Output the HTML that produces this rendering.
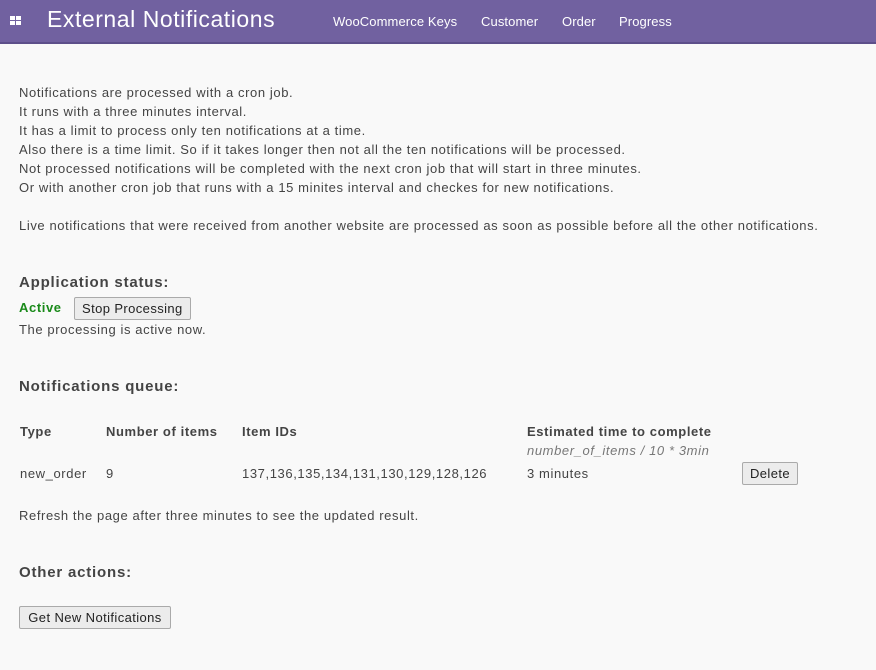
<!DOCTYPE html>
<html><head><style>
body{margin:0;background:#f9f9f9;font-family:"Liberation Sans",sans-serif;font-size:13px;color:#444;width:876px;height:670px;overflow:hidden;letter-spacing:0.6px}
.hdr{height:42px;background:#7161a0;border-bottom:2px solid #5d4f8a;position:relative;color:#fff}
.hdr .t{position:absolute;left:47px;top:6px;font-size:23px;letter-spacing:0.55px}
.hdr .nav{position:absolute;top:14px;font-size:13px;letter-spacing:0.1px}
.ic{position:absolute;left:10px;top:16px;width:11px;height:9px}
.ic i{position:absolute;width:5px;height:4px;background:#fff}
p{margin:0;line-height:19px}
h3{margin:0;font-size:15px;font-weight:bold;position:absolute;left:19px;color:#444;letter-spacing:0.8px}
.btn{position:absolute;border:1px solid #aaa;background:#ececec;color:#222;font-size:13px;height:23px;line-height:22px;padding:0 7px;box-sizing:border-box;border-radius:2px;letter-spacing:0.4px}
.a{position:absolute}
.b{font-weight:bold}
</style></head><body>
<div class="hdr">
<div class="ic"><i style="left:0;top:0"></i><i style="left:6px;top:0"></i><i style="left:0;top:5px"></i><i style="left:6px;top:5px"></i></div>
<div class="t">External Notifications</div>
<div class="nav" style="left:333px">WooCommerce Keys</div>
<div class="nav" style="left:481px">Customer</div>
<div class="nav" style="left:562px">Order</div>
<div class="nav" style="left:619px">Progress</div>
</div>
<div class="a" style="left:19px;top:83px">
<p>Notifications are processed with a cron job.</p>
<p>It runs with a three minutes interval.</p>
<p>It has a limit to process only ten notifications at a time.</p>
<p>Also there is a time limit. So if it takes longer then not all the ten notifications will be processed.</p>
<p>Not processed notifications will be completed with the next cron job that will start in three minutes.</p>
<p>Or with another cron job that runs with a 15 minites interval and checkes for new notifications.</p>
<p>&nbsp;</p>
<p>Live notifications that were received from another website are processed as soon as possible before all the other notifications.</p>
</div>
<h3 style="top:274px">Application status:</h3>
<div class="a b" style="left:19px;top:300px;color:#1a8a1a">Active</div>
<div class="btn" style="left:74px;top:297px">Stop Processing</div>
<div class="a" style="left:19px;top:322px">The processing is active now.</div>
<h3 style="top:378px">Notifications queue:</h3>
<div class="a b" style="left:20px;top:424px">Type</div>
<div class="a b" style="left:106px;top:424px">Number of items</div>
<div class="a b" style="left:242px;top:424px">Item IDs</div>
<div class="a b" style="left:527px;top:424px">Estimated time to complete</div>
<div class="a" style="left:527px;top:443px;font-style:italic;color:#777">number_of_items / 10 * 3min</div>
<div class="a" style="left:20px;top:466px">new_order</div>
<div class="a" style="left:106px;top:466px">9</div>
<div class="a" style="left:242px;top:466px">137,136,135,134,131,130,129,128,126</div>
<div class="a" style="left:527px;top:466px">3 minutes</div>
<div class="btn" style="left:742px;top:462px;width:56px;text-align:center;padding:0">Delete</div>
<div class="a" style="left:19px;top:508px">Refresh the page after three minutes to see the updated result.</div>
<h3 style="top:564px">Other actions:</h3>
<div class="btn" style="left:19px;top:606px;width:152px;text-align:center;padding:0">Get New Notifications</div>
</body></html>
